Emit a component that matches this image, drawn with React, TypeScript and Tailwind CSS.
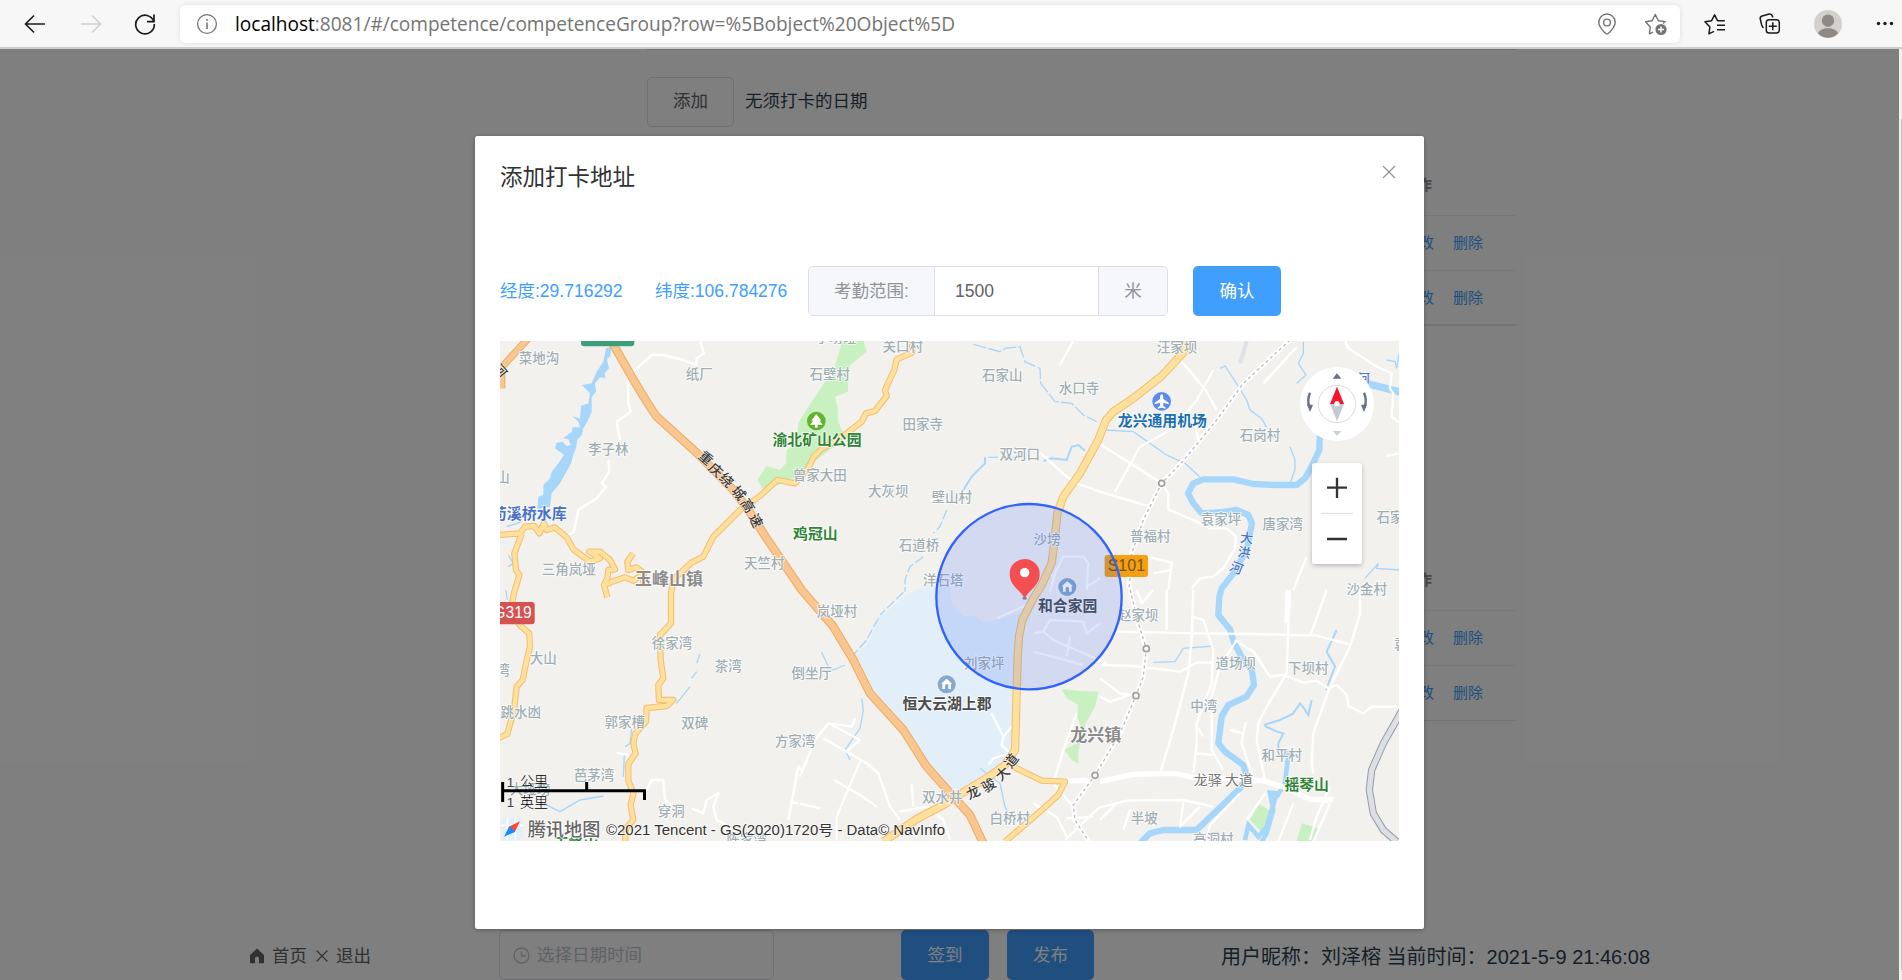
import React from 'react';

const CJK = '"Liberation Sans", "Noto Sans CJK SC", sans-serif';

/* ---------- browser toolbar ---------- */

function Toolbar() {
  return (
    <header className="flex h-[49px] shrink-0 items-center border-b-2 border-[#cdcdcd] bg-[#f7f7f7] text-[#1b1b1b]">
      <div className="flex w-[180px] shrink-0 items-center">
        <svg className="ml-6 h-6 w-[22px]" viewBox="0 0 22 24" fill="none" stroke="currentColor" strokeWidth="1.6">
          <path d="M10 3.5 1.5 12l8.500 8.500M1.500 12H21" />
        </svg>
        <svg className="ml-[34px] h-6 w-[22px] text-[#cfcfcf]" viewBox="0 0 22 24" fill="none" stroke="currentColor" strokeWidth="1.6">
          <path d="M12 3.500 20.500 12 12 20.500M20.500 12H1" />
        </svg>
        <svg className="ml-[31px] h-6 w-6" viewBox="0 0 24 24" fill="none" stroke="currentColor" strokeWidth="1.7">
          <path d="M20.800 9.500A9.300 9.300 0 1 0 21.300 12" />
          <path d="M21 2.500v7.200h-7" />
        </svg>
      </div>
      <div className="flex h-[38px] w-[1500px] shrink-0 items-center rounded-md bg-white shadow-[0_0_5px_rgba(0,0,0,0.1)]">
        <svg className="ml-4 h-[22px] w-[22px] text-[#737373]" viewBox="0 0 22 22" fill="none" stroke="currentColor" strokeWidth="1.3">
          <circle cx="11" cy="11" r="9.400" />
          <path d="M11 9.500v6.500M11 6v1.800" strokeWidth="1.600" />
        </svg>
        <span
          className="ml-[17px] w-[1361px] pt-px text-[19.1px] tracking-[-0.02px] whitespace-nowrap text-[#757575]"
          style={{ fontFamily: '"Open Sans", "Noto Sans", sans-serif' }}
        >
          <span className="text-black">localhost</span>:8081/#/competence/competenceGroup?row=%5Bobject%20Object%5D
        </span>
        <svg className="h-6 w-[22px] shrink-0 text-[#737373]" viewBox="0 0 22 24" fill="none" stroke="currentColor" strokeWidth="1.4">
          <path d="M11 22c-1.500 0-8.200-7-8.200-11.800a8.200 8.200 0 0 1 16.400 0C19.200 15 12.500 22 11 22Z" />
          <circle cx="11" cy="10.500" r="3.400" />
        </svg>
        <svg className="ml-[26px] h-6 w-6 shrink-0 text-[#737373]" viewBox="0 0 24 24" fill="none" stroke="currentColor" strokeWidth="1.4" strokeLinejoin="round">
          <path d="M9 20.200 5.400 21.800 6.300 15 1.500 9.800l6.700-1.100L11.300 2.500l3.100 6.200 6.700.9-2 2" />
          <circle cx="17" cy="17.500" r="5.600" fill="currentColor" stroke="none" />
          <path d="M17 14.500v6M14 17.500h6" stroke="white" />
        </svg>
      </div>
      <div className="flex flex-1 items-center">
        <svg className="ml-6 h-6 w-6" viewBox="0 0 24 24" fill="none" stroke="currentColor" strokeWidth="1.5" strokeLinejoin="round">
          <path d="M10 19.300 4.900 21.800 5.900 15 1 9.800l6.600-1.100L10.600 2.800l2.900 5.900h7.300M13 13.300h8M13 17.800h8" />
        </svg>
        <svg className="ml-[30px] h-6 w-6" viewBox="0 0 24 24" fill="none" stroke="currentColor" strokeWidth="1.500" strokeLinejoin="round">
          <path d="M5.500 15.800C4.500 15 4 14 3.700 13L2.200 6.800c-.2-1.500.5-2.400 2-2.800l7-2c1.700-.3 2.700.5 3.200 2l.3 1.500" />
          <rect x="8.300" y="7.700" width="13" height="13.300" rx="2.800" />
          <path d="M14.800 10.300v8M10.800 14.300h8" />
        </svg>
        <svg className="ml-8 h-7 w-7" viewBox="0 0 28 28">
          <circle cx="14" cy="14" r="14" fill="#d2d0cc" />
          <circle cx="14" cy="10.700" r="6.200" fill="#8d8984" />
          <path d="M4 23.500c2.500-7 17.500-7 20 0A14 14 0 0 1 4 23.500Z" fill="#8d8984" />
        </svg>
        <svg className="ml-[33px] h-6 w-5" viewBox="0 0 20 24" fill="currentColor">
          <circle cx="3.500" cy="11.500" r="1.700" />
          <circle cx="10" cy="11.500" r="1.700" />
          <circle cx="16.500" cy="11.500" r="1.700" />
        </svg>
      </div>
    </header>
  );
}

/* ---------- page behind the dialog ---------- */

function RecordTable({ last }: { last: string }) {
  return (
    <div className="w-[869px] text-[15px] leading-5">
      <div className="grid h-[61px] grid-cols-[1fr_114px] items-center border-b border-[#ebeef5] font-bold text-[#909399]">
        <span />
        <span>操作</span>
      </div>
      {[0, 1].map((i) => (
        <div key={i} className={`flex h-[55px] items-center justify-end gap-[19px] pr-[33px] text-[#409eff] ${i === 1 ? last : 'border-b border-[#ebeef5]'}`}>
          <span>修改</span>
          <span>删除</span>
        </div>
      ))}
    </div>
  );
}

function Page() {
  return (
    <div className="flex h-full flex-col bg-white text-[17.500px] text-[#2c3e50]">
      <div className="ml-[647px] h-[882px] w-[869px] border-t border-[#dcdfe6]">
        <div className="mt-[27px] flex h-[50px] items-center gap-[11px]">
          <button className="h-[50px] w-[87px] rounded-[5px] border border-[#dcdfe6] pb-[2px] text-[#606266]">添加</button>
          <span className="pb-[2px]">无须打卡的日期</span>
        </div>
        <div className="mt-[28px]">
          <RecordTable last="border-b-2 border-[#e4e7ed]" />
        </div>
        <div className="mt-[224px]">
          <RecordTable last="border-b border-[#e4e7ed]" />
        </div>
      </div>
      <footer className="flex h-[50px] shrink-0 items-center">
        <div className="ml-[249px] flex w-[250px] items-center pt-[2px] text-[#606266]">
          <svg className="h-4 w-4" viewBox="0 0 16 16" fill="#606266">
            <path d="M8 .5 15 7v7.500a.8.8 0 0 1-.8.8H10V10.500a2 2 0 0 0-4 0v4.800H1.800a.8.8 0 0 1-.8-.8V7Z" />
          </svg>
          <span className="ml-[7px]">首页</span>
          <svg className="ml-2 h-3.5 w-[14px]" viewBox="0 0 14 14" stroke="#606266" strokeWidth="1.100">
            <path d="m1.500 1.500 11 11m0-11-11 11" />
          </svg>
          <span className="ml-[7px]">退出</span>
        </div>
        <div className="flex h-[50px] w-[275px] items-center rounded-[5px] border border-[#dcdfe6] pl-[13px] text-[#c0c4cc]">
          <svg className="h-[17px] w-[17px]" viewBox="0 0 17 17" fill="none" stroke="currentColor" strokeWidth="1.300">
            <circle cx="8.500" cy="8.500" r="7.500" />
            <path d="M8.500 4v5h4" />
          </svg>
          <span className="ml-[7px] pt-px">选择日期时间</span>
        </div>
        <button className="ml-[127px] h-[50px] w-[88px] rounded-[5px] bg-[#409eff] text-white">签到</button>
        <button className="ml-[18px] h-[50px] w-[87px] rounded-[5px] bg-[#409eff] text-white">发布</button>
        <span className="ml-[127px] pt-[4px] text-[20px] whitespace-nowrap">用户昵称：刘泽榕 当前时间：2021-5-9 21:46:08</span>
      </footer>
    </div>
  );
}

/* ---------- map ---------- */

type L = [string, number, number];

const villages: L[] = [
  ['菜地沟', 117, 54], ['纸厂', 598, 102], ['李子林', 325, 328], ['山', 9, 412], ['三角岚垭', 206, 687],
  ['天竺村', 793, 669], ['曾家大田', 959, 404], ['石壁村', 989, 102], ['子塝磴', 1008, -8], ['关口村', 1208, 18],
  ['田家寺', 1268, 253], ['石家山', 1507, 105], ['水口寺', 1737, 145], ['双河口', 1559, 343], ['大灰坝', 1165, 453],
  ['壁山村', 1355, 472], ['石道桥', 1257, 614], ['洋石塔', 1330, 721], ['沙塝', 1641, 598], ['汪家坝', 2031, 21],
  ['石岗村', 2280, 285], ['袁家坪', 2163, 536], ['唐家湾', 2348, 551], ['普福村', 1951, 587], ['石家坝', 2690, 530],
  ['沙金村', 2600, 748], ['大山', 130, 955], ['湾', 9, 991], ['跳水凼', 62, 1117], ['郭家槽', 374, 1146],
  ['双碑', 584, 1148], ['徐家湾', 516, 909], ['茶湾', 685, 979], ['倒坐厅', 935, 1000], ['方家湾', 885, 1202],
  ['芭茅湾', 282, 1306], ['大垭塝', 90, 1346], ['穿洞', 514, 1413], ['陈家湾', 740, 1497], ['岚垭村', 1011, 813],
  ['刘家坪', 1453, 970], ['双水井', 1327, 1372], ['白桥村', 1529, 1435], ['赵家坝', 1915, 825], ['道场坝', 2207, 970],
  ['下坝村', 2425, 983], ['中湾', 2111, 1098], ['和平村', 2345, 1245], ['半坡', 1933, 1435], ['高洞村', 2140, 1497],
  ['袁家', 2722, 913],
];

const greens: L[] = [['渝北矿山公园', 951, 299], ['鸡冠山', 946, 582], ['摇琴山', 2420, 1333], ['玉峰山', 228, 1510]];
const estates: L[] = [['恒大云湖上郡', 1341, 1092], ['和合家园', 1703, 797]];
const towns: L[] = [['玉峰山镇', 507, 715], ['龙兴镇', 1787, 1183]];

const roadLetters: [string, number, number, number][] = [
  ['重', 618, 354, 42], ['庆', 648, 390, 42], ['绕', 680, 420, 45], ['城', 716, 459, 50], ['高', 744, 497, 58], ['速', 768, 542, 64],
  ['龙', 1419, 1357, -25], ['骏', 1466, 1335, -32], ['大', 1507, 1300, -42], ['道', 1534, 1262, -52],
];
const riverLetters: [string, number, number, number][] = [['大', 2240, 594, 6], ['洪', 2233, 637, 10], ['河', 2210, 683, 22]];

function Labels({ items, size, fill, weight = 400 }: { items: L[]; size: number; fill: string; weight?: number }) {
  return (
    <g fontSize={size} fill={fill} fontWeight={weight} textAnchor="middle" stroke="#fff" strokeOpacity=".85" strokeWidth="5" strokeLinejoin="round" paintOrder="stroke">
      {items.map(([t, x, y]) => (
        <text key={t + x} x={x} y={y + size * 0.37}>{t}</text>
      ))}
    </g>
  );
}

function Turned({ items, size, fill }: { items: [string, number, number, number][]; size: number; fill: string }) {
  return (
    <g fontSize={size} fill={fill} textAnchor="middle" stroke="#fff" strokeOpacity=".6" strokeWidth="4" paintOrder="stroke" fontWeight="500">
      {items.map(([t, x, y, r]) => (
        <text key={t + x} transform={`translate(${x} ${y}) rotate(${r})`} y={size * 0.37}>{t}</text>
      ))}
    </g>
  );
}

const yellowRoads = [
  'M1236 -5V38L1190 58 1183 90 1155 150 1160 168 1125 213 1098 220 1085 245 1040 280 965 327 940 352 925 385 885 430 832 420 780 468 720 510 640 590 610 650 575 668 520 718 513 760V850L480 885 482 960 490 1015 475 1035 477 1080 520 1080 500 1098 440 1104 438 1145 405 1182 400 1212 407 1240 385 1272V1322L400 1360 392 1395 400 1440 378 1465 375 1505',
  'M-5 585 60 580 75 560 103 558 118 580 132 550 140 570 165 562 200 592 220 628 270 665 300 655 268 635 300 635 330 660 345 688 325 690 322 715 312 735 322 772',
  'M312 735 345 722 375 712 400 722 432 700 410 682 385 690 382 665 400 640M430 705V740',
  'M65 582 43 640 48 690 58 705 42 760 30 820 62 858 88 880 90 920 80 960 68 1020 50 1040 42 1110 22 1182 -5 1195',
];
const mainRoad =
  'M2065 -5 2050 38 1985 108 1900 175 1840 215 1818 240 1795 300 1740 400 1690 470 1672 520 1665 590 1655 670 1625 735 1600 775 1567 840 1557 890 1553 950 1548 1130 1545 1230 1515 1275 1470 1308 1400 1350 1330 1395 1250 1437 1150 1505';
const branchRoad = 'M1540 1280 1625 1322 1695 1325 1675 1365 1620 1415 1515 1505';
const expressway =
  'M338 10 395 110 440 185 468 228 590 338 700 450 742 505 800 595 905 750 1000 860 1060 960 1110 1060 1210 1170 1280 1280 1360 1370 1410 1425 1450 1510';
const river =
  'M2460 270 2458 330 2432 385 2415 415 2390 435H2330L2260 432 2200 418 2110 418 2080 430 2064 460 2080 490 2105 520 2170 516 2210 510 2245 525 2256 550 2240 630 2200 700 2165 745 2158 770 2155 825 2190 868 2203 910 2225 950 2255 988 2262 1035 2240 1070 2185 1095 2165 1130 2155 1210 2175 1235 2230 1275 2240 1310 2220 1345 2090 1470H1990L1950 1480 1920 1510';
const railway =
  'M2370 0 2230 130 2150 240 2050 362 1985 430 1930 540 1895 640 1888 740 1915 850 1939 926 1930 1010 1908 1067 1860 1180 1785 1306 1720 1395 1725 1440 1770 1510';

const whiteRoads = [
  'M600 3 612 40 590 55 588 75 550 60 490 45 455 45 400 95 385 125V190L393 215 350 245 360 300M325 360 328 395 305 430 318 440 290 475 235 510 222 575 205 585',
  'M1720 3 1680 75M2040 60 2080 105 2120 155 2150 210M2140 90 2090 180 2035 250 1985 285 1920 320 1845 455M1800 312 1985 430M2080 230 2095 300M1620 338 1700 410 1730 430 1800 455 1950 500M1985 430 2005 460V508L2090 545 2130 565 2180 565 2208 590 2205 625 2170 685 2140 710 2100 715 2075 745',
  'M1940 650 2015 668 2005 750M1960 700 2010 690M2420 650 2380 750M2535 3 2545 25 2585 50 2630 80 2675 100 2670 145 2680 160 2675 230 2697 248M2660 348 2697 340',
  'M2080 750 2075 900 2065 1000 2020 1170 1980 1300M2000 750V870M2370 750 2365 860 2360 1000 2300 1100 2275 1150 2270 1200 2295 1320M2480 750 2430 890M2580 750V820L2560 890 2545 930 2520 980 2490 1040 2440 1180 2435 1270 2440 1300',
  'M1840 875 2100 880 2260 882 2370 885 2450 887 2545 912M1805 975 1900 978 2040 995 2090 968 2140 968M2205 900 2260 935 2280 965 2310 1010 2350 1005 2410 1028 2450 1022 2485 1045 2510 1035 2540 1065 2545 1098 2590 1120 2615 1100 2697 1100',
  'M2075 830 2110 840 2140 930 2135 1030 2090 1150V1210L2080 1300M2210 900 2160 980 2135 1070V1230L2170 1290M2190 1170 2230 1180 2225 1210 2265 1330M2238 1145 2230 1180M2090 1240 2140 1245M2095 1165 2110 1190M1910 750 1925 790 1960 750',
  'M1800 1402 1880 1382 2050 1380 2140 1400M2050 1385 2040 1460 2100 1400M1800 1440 1850 1390M1870 1470 1890 1410M2490 1340 2450 1430 2430 1500M2380 1390 2335 1505M2490 1390 2440 1505M2220 1360 2130 1455 2120 1500M2295 1360 2240 1440',
  'M900 1310 945 1200 985 1150 1080 1200 1040 1235M1065 1135 1055 1160 985 1150M970 1195 1040 1235 1100 1270 1135 1300 1170 1400 1200 1440M1080 1265 1010 1430V1500M900 1390 960 1405M1002 1320 1080 1365 1130 1400M1200 1415 1280 1400 1330 1440 1350 1500M1235 1330 1240 1400M865 1440 895 1280 905 1290M870 1385 895 1390',
  'M440 1350 455 1320 490 1320 495 1380 520 1400M575 1405 610 1420 620 1380 655 1360 640 1400 650 1440 690 1460M350 1238 385 1245M1475 1120 1510 1190 1505 1215 1530 1240 1480 1255 1465 1275M1510 1190 1535 1160M1720 1400 1660 1330 1690 1230 1730 1120M1600 1390 1670 1430 1700 1490M1695 1500 1800 1400M1700 1435 1780 1430',
  'M2290 130 2350 65 2390 20M1800 1015 1860 1060 1890 1065 1830 1085 1800 1070M1650 755 1665 700 1690 650 1750 650 1765 670 1760 750',
  'M1490 835 1570 800 1600 785M1600 880 1630 875 1660 900 1820 970M1600 935 1750 975M1630 875 1650 840 1750 845 1760 880 1800 850M1710 890 1700 950M1760 740 1800 715M1640 700 1665 710',
];

function CityMap() {
  return (
    <svg className="block h-[500px] w-[899px]" viewBox="0 3 2697 1500" preserveAspectRatio="none" fill="none" style={{ fontFamily: '"Noto Sans CJK SC", sans-serif' }}>
      <defs>
        <filter id="soft" x="-30%" y="-30%" width="160%" height="160%">
          <feDropShadow dx="0" dy="5" stdDeviation="6" floodOpacity=".25" />
        </filter>
      </defs>
      <rect y="0" width="2700" height="1510" fill="#f2f1ee" />

      {/* parks and districts */}
      <path d="M1290 735 1225 760 1140 830 1105 910 1058 955 1115 1060 1210 1170 1280 1280 1350 1358 1440 1325 1520 1280 1535 1230 1550 1000 1562 820 1500 838 1450 848 1430 830 1390 828 1355 795 1350 740Z" fill="#e2eff8" />
      <g fill="#c8f0c0">
        <path d="M1028 0H1090L1100 35 1050 75 1043 155 1005 170 1012 200 1015 245 1030 280 1000 320 950 360 920 390 890 410 850 430 790 450 772 420 800 378 840 390 858 370 860 330 890 310 895 250 915 215 975 125 1003 85Z" />
        <path d="M1685 1047 1730 1052 1795 1055 1785 1100 1758 1148 1735 1230V1272L1715 1260 1693 1230 1730 1210 1745 1170 1732 1130 1735 1095 1700 1075Z" />
        <path d="M2278 1392 2315 1415 2295 1485 2250 1440ZM2405 1450 2455 1465 2440 1505H2390Z" />
      </g>

      {/* water */}
      <path fill="#a7d6fb" d="M318 25 335 20 330 50 322 55V65L327 85 314 100 317 115 300 112 285 130 288 155 275 170 275 215 262 245 250 265 245 285 232 300 228 325 220 345 213 370 205 385 180 430 155 460 150 500 112 508 115 470 130 465 130 435 150 415 155 395 175 370 192 345 165 325 170 308 188 305 200 318 212 315 205 298 190 295 215 275 218 262 240 262 235 245 217 228 240 236 243 198 265 190 270 160 246 135 275 130 290 95 310 65Z" />
      <path d={river} stroke="#a7d6fb" strokeWidth="19" strokeLinejoin="round" />
      <path d="M2590 128 2700 156" stroke="#a7d6fb" strokeWidth="22" />
      <path d="M2235 1500 2245 1455 2275 1490 2300 1460 2330 1360 2310 1358 2320 1410 2300 1480 2285 1505M2365 1240 2355 1330 2330 1370" stroke="#a7d6fb" strokeWidth="14" />
      <g stroke="#a7d6fb" strokeWidth="4">
        <path strokeWidth="6" d="M2292 1155 2340 1140 2378 1122 2400 1090 2412 1105 2425 1125 2435 1080M2295 1158 2330 1175 2350 1180 2335 1210V1230L2370 1235M2478 1050 2505 980 2480 935 2510 870" />
        <path d="M1420 13 1500 35 1515 25 1560 20 1575 65 1620 85 1622 130 1665 185 1715 190 1750 225 1790 245" strokeDasharray="40 7" />
        <path strokeWidth="6" d="M1755 332 1735 315 1715 320 1700 360 1655 355 1630 363M1455 352V370L1415 410 1390 450" />
        <path d="M1570 352H1455M1340 510 1320 560 1300 580M1270 650 1230 680 1215 720V755M1210 757 1140 825M1135 835 1100 900 1060 945" strokeDasharray="30 8" />
        <path d="M2160 85 2175 78 2200 115 2240 180 2250 210 2285 235 2300 262M1815 270 1900 275 1950 310 2000 345 2055 370 2100 412M2410 5V40L2395 70 2418 105 2390 130M2370 320 2385 360V390L2372 425M2660 60 2685 65 2690 85 2697 40M1960 967 2025 965 2050 925 2140 918M2595 715 2635 670 2630 685 2697 690" />
        <path d="M965 937 985 980 1000 990 1035 975M1085 1075 1090 1110 1080 1165 1035 1230 1050 1260M600 942 590 970M575 1015 590 995M570 1040 530 1090M395 1165 390 1210 375 1220M373 1245 370 1310M20 560 65 545M25 645 40 670 25 680M130 1390 180 1415 240 1380 310 1368M18 750 22 780M1440 1285 1500 1330 1515 1400 1530 1430" />
      </g>

      {/* streets */}
      <g stroke="#fff" strokeWidth="7" strokeLinejoin="round">
        {whiteRoads.map((d) => (
          <path key={d.slice(0, 14)} d={d} />
        ))}
        <path d="M1800 1325 1900 1303 2020 1300 2080 1312 2230 1318 2290 1322 2360 1345 2430 1378 2500 1380M1690 1323 1765 1322M2365 750 2360 850" strokeWidth="16" />
      </g>
      <path d="M2240 3 2220 70" stroke="#dfe2e7" strokeWidth="13" />
      <path d={railway} stroke="#fff" strokeWidth="14" />
      <path d={railway} stroke="#bbb9bd" strokeWidth="4" strokeDasharray="9 9" />
      <path d="M2710 1105 2650 1210 2615 1290 2608 1350 2620 1420 2650 1470 2690 1505" stroke="#969ba6" strokeWidth="22" />
      <path d="M2710 1105 2650 1210 2615 1290 2608 1350 2620 1420 2650 1470 2690 1505" stroke="#dcdfe4" strokeWidth="16" />

      <g strokeLinejoin="round">
        <g stroke="#f4bd6e" strokeWidth="19">
          {yellowRoads.map((d) => <path key={d.slice(0, 14)} d={d} />)}
          <path d={branchRoad} />
          <path d={mainRoad} strokeWidth="25" />
        </g>
        <g stroke="#ffe09c" strokeWidth="13">
          {yellowRoads.map((d) => <path key={d.slice(0, 14)} d={d} />)}
          <path d={branchRoad} />
          <path d={mainRoad} strokeWidth="19" />
        </g>
        <path d={expressway} stroke="#ecab62" strokeWidth="26" />
        <path d={expressway} stroke="#f9c68f" strokeWidth="20" />
        <path d="M85 -5 5 82V145" stroke="#ecab62" strokeWidth="22" />
        <path d="M85 -5 5 82V145" stroke="#f9c68f" strokeWidth="16" />
      </g>

      {/* stations */}
      <g fill="#f7f7f7" stroke="#a19f9f" strokeWidth="5">
        <circle cx="1985" cy="430" r="9" />
        <circle cx="1939" cy="926" r="9" />
        <circle cx="1908" cy="1067" r="9" />
        <circle cx="1785" cy="1306" r="9" />
      </g>

      <Labels items={villages} size={40.5} fill="#a0aeb3" weight={500} />
      <Labels items={greens} size={44.5} fill="#2f8436" weight={700} />
      <Labels items={estates} size={44.5} fill="#4c4c4c" weight={700} />
      <Labels items={towns} size={51} fill="#8b8b8b" weight={700} />
      <Labels items={[['龙兴通用机场', 1987, 241]]} size={44.5} fill="#1a6fb3" weight={700} />
      <Labels items={[['苟溪桥水库', 88, 519]]} size={45} fill="#4871c8" weight={700} />
      <Labels items={[['龙驿 大道', 2170, 1318]]} size={42} fill="#777" />
      <Turned items={roadLetters} size={41} fill="#3d3d3d" />
      <Turned items={riverLetters} size={39} fill="#4a76c6" />
      <Turned items={[['河', 2592, 115, 0]]} size={36} fill="#4a76c6" />
      <Turned items={[['河', 2, 92, 50]]} size={38} fill="#3d3d3d" />

      {/* points of interest */}
      <circle cx="949" cy="243" r="28" fill="#64b32f" />
      <path d="M949 222 934 242H940L930 254H945V263H953V254H968L958 242H964Z" fill="#fff" />
      <circle cx="1985" cy="184" r="28" fill="#5a8cf0" />
      <path d="M1985 163c4 0 5 5 5 14l16 11v5l-16-5v9l7 6v3l-12-3-12 3v-3l7-6v-9l-16 5v-5l16-11c0-9 1-14 5-14Z" fill="#fff" />
      {[[1702, 741], [1340, 1033]].map(([x, y]) => (
        <g key={x} transform={`translate(${x} ${y})`}>
          <circle r="27" fill="#86a9cc" />
          <path d="M0 -17 17 -2H13V14H5V4A5 5 0 0 0 -5 4V14H-13V-2H-17Z" fill="#fff" />
        </g>
      ))}

      {/* shields */}
      <g fontSize="48" style={{ fontFamily: '"Liberation Sans", sans-serif' }}>
        <rect x="-60" y="786" width="164" height="67" rx="9" fill="#d65250" />
        <text x="-20" y="835" fontSize="47" fill="#fff">G319</text>
        <rect x="1814" y="645" width="130" height="66" rx="8" fill="#f3a112" />
        <text x="1823" y="694" fill="#7c5006">S101</text>
        <rect x="243" y="-46" width="160" height="65" rx="10" fill="#3e9e7c" />
        <text x="323" y="4" fontSize="46" fill="#fff" textAnchor="middle">G5001</text>
      </g>

      {/* attendance range and marker */}
      <circle cx="1587" cy="770" r="278" fill="#295bff" fillOpacity=".155" stroke="#2f62ff" strokeWidth="7" />
      <ellipse cx="1574" cy="775" rx="7" ry="4" fill="#6f7fae" />
      <path d="M1574 776C1562 750 1529 738 1529 701a45 44 0 0 1 90 0C1619 738 1586 750 1574 776Z" fill="#f54e50" />
      <circle cx="1574" cy="698" r="14" fill="#fff" />

      {/* compass */}
      <circle cx="2511" cy="192" r="111" fill="#fff" />
      <circle cx="2511" cy="192" r="56" stroke="#dcdcde" strokeWidth="3" />
      <path d="M2511 140 2532 192H2490Z" fill="#f5152c" />
      <path d="M2511 243 2532 192H2490Z" fill="#c5c9d0" />
      <circle cx="2511" cy="191" r="8" fill="#fff" />
      <path d="M2498 116 2511 100 2524 116Z" fill="#667086" />
      <path d="M2498 273 2511 287 2524 273Z" fill="#ccd0d8" />
      <g stroke="#667086" strokeWidth="7">
        <path d="M2430 158Q2421 178 2428 202M2592 158Q2601 178 2594 202" />
        <path d="M2421 193 2430 216 2439 195ZM2601 193 2592 216 2583 195Z" fill="#667086" stroke="none" />
      </g>

      {/* zoom */}
      <rect x="2436" y="369" width="150" height="303" rx="9" fill="#fff" filter="url(#soft)" />
      <path d="M2463 520H2559" stroke="#dbdbdb" strokeWidth="3" />
      <path d="M2481 443H2541M2511 413V474M2481 597H2541" stroke="#333" strokeWidth="7" />

      {/* scale */}
      <path d="M8 1326V1386M8 1352H438M260 1326V1352M433.500 1352V1380" stroke="#000" strokeWidth="9" />
      <g fontSize="42" fontWeight="300" fill="#000">
        <text x="20" y="1340" fontSize="40" fontWeight="400" fill="#444" fontFamily="Liberation Sans">1</text>
        <text x="60" y="1339">公里</text>
        <text x="20" y="1402" fontSize="40" fontWeight="400" fill="#444" fontFamily="Liberation Sans">1</text>
        <text x="60" y="1401">英里</text>
      </g>

      {/* attribution */}
      <rect x="3" y="1434" width="66" height="66" rx="14" fill="#e1f0fa" />
      <path d="M22 1434V1500M46 1434V1500M3 1456H69" stroke="#fff" strokeWidth="5" />
      <path d="M60 1444 26 1460 44 1477Z" fill="#ff4b34" />
      <path d="M12 1490 28 1458 46 1475Z" fill="#168cff" />
      <text x="83" y="1489" fontSize="54.500" fill="#666" stroke="#fff" strokeWidth="5" paintOrder="stroke" fontWeight="500">腾讯地图</text>
      <text x="318" y="1484" fontSize="42" fill="#333" textLength="1017" lengthAdjust="spacingAndGlyphs" stroke="#fff" strokeOpacity=".7" strokeWidth="4" paintOrder="stroke" style={{ fontFamily: CJK }}>
        ©2021 Tencent - GS(2020)1720号 - Data© NavInfo
      </text>
    </svg>
  );
}

/* ---------- dialog ---------- */

function AddressDialog() {
  return (
    <section className="absolute top-[87px] left-[475px] flex h-[793px] w-[949px] flex-col rounded-[2.500px] bg-white px-[25px] shadow-[0_1px_4px_rgba(0,0,0,0.3)]">
      <div className="flex items-center justify-between pt-[27px]">
        <h2 className="text-[22.500px] leading-[30px] text-[#303133]">添加打卡地址</h2>
        <svg className="mr-[3px] mb-[13px] h-[14px] w-[14px]" viewBox="0 0 14 14" stroke="#909399" strokeWidth="1.200">
          <path d="m1 1 12 12M13 1 1 13" />
        </svg>
      </div>
      <div className="mt-[73px] flex h-[50px] items-center text-[17.500px]">
        <span className="w-[155px] text-[#409eff]">经度:29.716292</span>
        <span className="w-[153px] text-[#409eff]">纬度:106.784276</span>
        <div className="flex h-[50px] w-[360px] overflow-hidden rounded-[5px] border border-[#dcdfe6]">
          <span className="flex w-[126px] items-center justify-center border-r border-[#dcdfe6] bg-[#f5f7fa] text-[#909399]">考勤范围:</span>
          <span className="flex flex-1 items-center pl-5 text-[#606266]">1500</span>
          <span className="flex w-[69px] items-center justify-center border-l border-[#dcdfe6] bg-[#f5f7fa] text-[#909399]">米</span>
        </div>
        <button className="ml-[25px] h-[50px] w-[88px] rounded-[5px] bg-[#409eff] text-white">确认</button>
      </div>
      <div className="mt-[25px]">
        <CityMap />
      </div>
    </section>
  );
}

export default function App() {
  return (
    <div className="flex h-[980px] w-[1902px] flex-col overflow-hidden" style={{ fontFamily: CJK }}>
      <Toolbar />
      <div className="flex min-h-0 flex-1">
        <div className="relative w-[1899px] overflow-hidden">
          <Page />
          <div className="absolute inset-0 bg-black/50" />
          <AddressDialog />
        </div>
        <div className="flex flex-1 flex-col items-end bg-[#f1f1f1] pt-[70px]">
          <div className="h-[851px] w-px bg-[#c1c1c1]" />
        </div>
      </div>
    </div>
  );
}
